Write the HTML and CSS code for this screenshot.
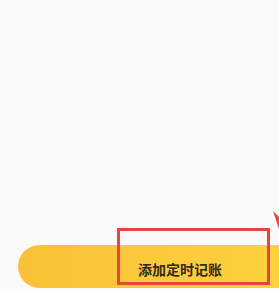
FILE: index.html
```html
<!DOCTYPE html>
<html lang="zh">
<head>
    <meta charset="UTF-8">
    <meta name="viewport" content="width=device-width, initial-scale=1.0">
    <title>添加定时记账</title>
    <link rel="stylesheet" href="styles.css">
</head>
<body>

<div class="page">
    <div class="spacer"></div>
    <div class="footer-bar">
        <button class="add-btn">添加定时记账</button>
    </div>
</div>

<!-- 标注 -->
<div class="mark-box"></div>
<svg class="mark-arrow" width="7" height="24" viewBox="0 0 7 24">
    <polygon points="1,0 7,18 7,6" fill="#e8453c"/>
</svg>

</body>
</html>
```

FILE: styles.css
```css
body {
    font-family: "Noto Sans CJK SC", "Noto Sans", sans-serif;
    background-color: #fafafa;
    margin: 0;
    padding: 0;
    overflow: hidden;
}
.page {
    height: 291px;
    display: flex;
    flex-direction: column;
}
.spacer {
    flex: 1;
}
.footer-bar {
    padding: 0 0 3px 18px;
}
.add-btn {
    display: flex;
    align-items: center;
    width: 100%;
    height: 43px;
    border: none;
    border-radius: 22px 0 0 22px;
    background: linear-gradient(90deg, #f9c137, #fdd13c);
    color: #33291d;
    font-family: inherit;
    font-size: 14px;
    font-weight: 600;
    padding: 4px 0 0 120px;
    margin: 0;
}
.mark-box {
    position: absolute;
    left: 117px;
    top: 228px;
    width: 147px;
    height: 51px;
    border: 3px solid #e8453c;
}
.mark-arrow {
    position: absolute;
    left: 272px;
    top: 211px;
}
```
